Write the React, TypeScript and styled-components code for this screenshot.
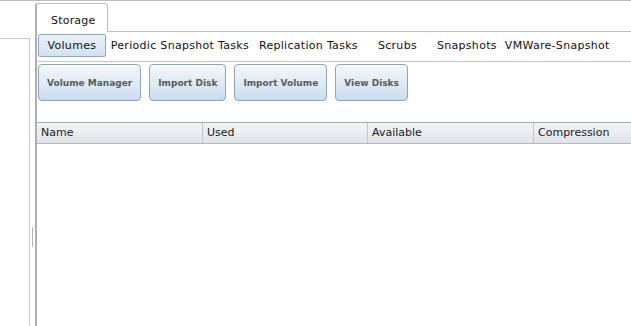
import styled, { createGlobalStyle } from "styled-components";

const GlobalStyle = createGlobalStyle`
  html, body {
    margin: 0;
    padding: 0;
    background: #fff;
  }
  body {
    font-family: "DejaVu Sans", Verdana, sans-serif;
    font-size: 11px;
    color: #222;
  }
`;

const Page = styled.div`
  display: flex;
  height: 326px;
  box-sizing: border-box;
  border-top: 1px solid #bcbcbc;
  overflow: hidden;
`;

const SidePane = styled.div`
  width: 29px;
  margin-top: 37px;
  border-top: 1px solid #c6c6c6;
  border-right: 1px solid #c6c6c6;
`;

const Splitter = styled.div`
  width: 5px;
  display: flex;
  flex-direction: column;
  padding-top: 226px;
  padding-left: 2px;
  box-sizing: border-box;
`;

const SplitHandle = styled.div`
  width: 1px;
  height: 20px;
  background: #b4b4b4;
`;

const Main = styled.div`
  flex: 1;
  display: flex;
  flex-direction: column;
  min-width: 0;
`;

const TabBar = styled.div`
  display: flex;
  align-items: flex-end;
  height: 31px;
  box-sizing: border-box;
  border-bottom: 1px solid #c4c4c4;
`;

const Tab = styled.div`
  height: 29px;
  box-sizing: border-box;
  margin-bottom: -1px;
  padding: 10px 14px 0 14px;
  line-height: 13px;
  width: 73px;
  background: #fff;
  border: 1px solid #bdbdbd;
  border-left: 2px solid #b0b0b0;
  border-bottom: none;
  border-radius: 3px 3px 0 0;
  color: #111;
  letter-spacing: 0.2px;
`;

const Content = styled.div`
  flex: 1;
  border-left: 2px solid #b0b0b0;
  display: flex;
  flex-direction: column;
`;

const SubTabs = styled.div`
  display: flex;
  padding: 2px 0 4px 1px;
  border-bottom: 1px solid #c4c4c4;
`;

const SubTab = styled.div<{ $active?: boolean; $gap?: number }>`
  height: 23px;
  box-sizing: border-box;
  line-height: 21px;
  padding: 0 ${(p) => (p.$active ? 8.5 : 0)}px;
  margin-left: ${(p) => p.$gap ?? 0}px;
  white-space: nowrap;
  letter-spacing: 0.3px;
  color: #111;
  border: 1px solid ${(p) => (p.$active ? "#90a9c3" : "transparent")};
  border-radius: 2px;
  background: ${(p) =>
    p.$active ? "linear-gradient(#e9f1f9, #d2e2f2)" : "transparent"};
`;

const Toolbar = styled.div`
  display: flex;
  gap: 8px;
  padding: 2px 0 21px 1px;
`;

const ActionButton = styled.button`
  height: 37px;
  padding: 0 8px;
  font-family: "DejaVu Sans", Verdana, sans-serif;
  font-size: 9px;
  font-weight: bold;
  color: #5a5a5a;
  border: 1px solid #8ea4bd;
  border-radius: 4px;
  background: linear-gradient(#f4f8fc, #dbe8f5 60%, #c9dcef);
  box-shadow: inset 0 1px 0 #fff;
  white-space: nowrap;
`;

const Grid = styled.div`
  flex: 1;
`;

const HeaderRow = styled.div`
  display: grid;
  grid-template-columns: 166px 165px 166px 1fr;
  height: 22px;
  box-sizing: border-box;
  border-top: 1px solid #a9a9a9;
  border-bottom: 1px solid #b9b9b9;
  background: linear-gradient(#f3f5f8, #e0e5eb);
`;

const HeaderCell = styled.div`
  padding-left: 4px;
  line-height: 20px;
  border-right: 1px solid #c2c6cc;
  color: #1a1a1a;
  white-space: nowrap;
  overflow: hidden;
  &:last-child {
    border-right: none;
  }
`;

const subTabs = [
  { label: "Volumes", active: true, gap: 0 },
  { label: "Periodic Snapshot Tasks", gap: 4 },
  { label: "Replication Tasks", gap: 8 },
  { label: "Scrubs", gap: 18 },
  { label: "Snapshots", gap: 18 },
  { label: "VMWare-Snapshot", gap: 6 },
];

const actions = ["Volume Manager", "Import Disk", "Import Volume", "View Disks"];
const columns = ["Name", "Used", "Available", "Compression"];

const App = () => {
  return (
    <>
      <GlobalStyle />
      <Page>
        <SidePane />
        <Splitter>
          <SplitHandle />
        </Splitter>
        <Main>
          <TabBar>
            <Tab>Storage</Tab>
          </TabBar>
          <Content>
            <SubTabs>
              {subTabs.map((t) => (
                <SubTab key={t.label} $active={t.active} $gap={t.gap}>
                  {t.label}
                </SubTab>
              ))}
            </SubTabs>
            <Toolbar>
              {actions.map((a) => (
                <ActionButton key={a}>{a}</ActionButton>
              ))}
            </Toolbar>
            <Grid>
              <HeaderRow>
                {columns.map((c) => (
                  <HeaderCell key={c}>{c}</HeaderCell>
                ))}
              </HeaderRow>
            </Grid>
          </Content>
        </Main>
      </Page>
    </>
  );
};

export default App;
